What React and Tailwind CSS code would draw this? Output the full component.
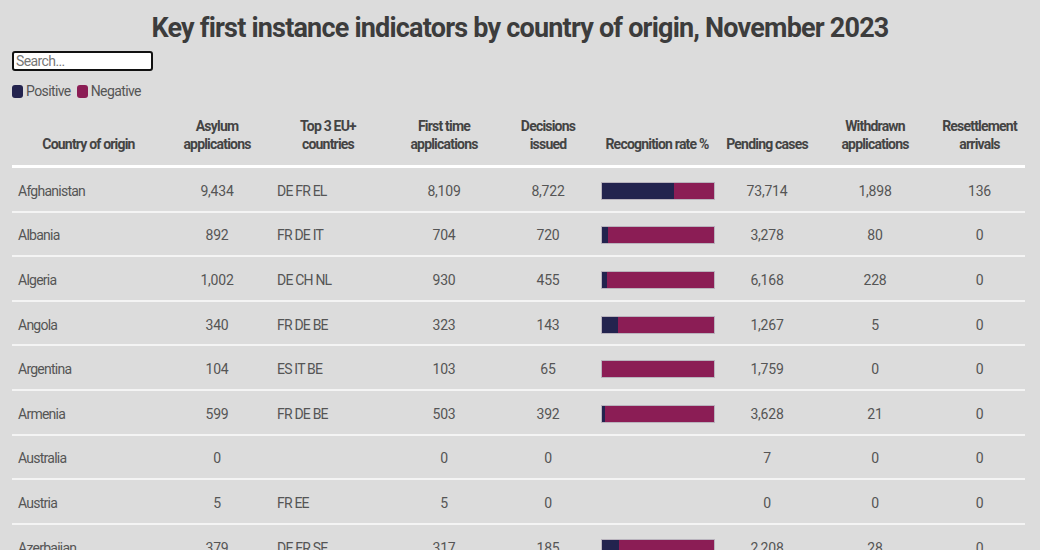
import React from 'react'

const rows = [
  ['Afghanistan', '9,434', 'DE FR EL', '8,109', '8,722', 64.5, '73,714', '1,898', '136'],
  ['Albania', '892', 'FR DE IT', '704', '720', 5.5, '3,278', '80', '0'],
  ['Algeria', '1,002', 'DE CH NL', '930', '455', 4.5, '6,168', '228', '0'],
  ['Angola', '340', 'FR DE BE', '323', '143', 15, '1,267', '5', '0'],
  ['Argentina', '104', 'ES IT BE', '103', '65', 0, '1,759', '0', '0'],
  ['Armenia', '599', 'FR DE BE', '503', '392', 3, '3,628', '21', '0'],
  ['Australia', '0', '', '0', '0', null, '7', '0', '0'],
  ['Austria', '5', 'FR EE', '5', '0', null, '0', '0', '0'],
  ['Azerbaijan', '379', 'DE FR SE', '317', '185', 16, '2,208', '28', '0'],
]

const headers = [
  'Country of origin',
  'Asylum applications',
  'Top 3 EU+ countries',
  'First time applications',
  'Decisions issued',
  'Recognition rate %',
  'Pending cases',
  'Withdrawn applications',
  'Resettlement arrivals',
]

const cols = 'grid grid-cols-[153px_104px_118px_114px_94px_124px_96px_120px_89px]'

const Bar = ({ pos }) => {
  if (pos === null) return null
  return (
    <div className="flex h-[18px] w-[114px] border border-[#b9b3bd]">
      <div className="h-full bg-[#23234e]" style={{ width: `${pos}%` }}></div>
      <div className="h-full flex-1 bg-[#8b1d55]"></div>
    </div>
  )
}

export default function App() {
  return (
    <div className="min-h-[550px] w-[1040px] overflow-hidden bg-[#dcdcdc] font-['Roboto',sans-serif] text-[#555]">
      <h1 className="pt-[11px] text-center text-[27px] font-bold leading-[34px] tracking-[-0.8px] text-[#3c3c3c]">
        Key first instance indicators by country of origin, November 2023
      </h1>

      <div className="px-3">
        <input
          type="text"
          placeholder="Search..."
          className="mt-[6px] h-[20px] w-[141px] rounded-[3px] border-2 border-[#111] bg-white px-[2px] text-[14px] leading-none tracking-[-0.6px] text-[#333] outline-none placeholder:text-[#777]"
        />

        {/* legend */}
        <div className="mt-[10px] flex items-center text-[14px] leading-[16px] tracking-[-0.6px]">
          <span className="mr-[3px] inline-block h-[13px] w-[11px] rounded-[3px] bg-[#23234e]"></span>
          <span>Positive</span>
          <span className="ml-[6px] mr-[3px] inline-block h-[13px] w-[11px] rounded-[3px] bg-[#8b1d55]"></span>
          <span>Negative</span>
        </div>

        {/* table */}
        <div className="mt-[9px] w-[1013px]">
          <div className={`${cols} h-[60px] items-center border-b-[3px] border-white pb-[3px] text-[14px] font-bold leading-[18px] tracking-[-0.8px] text-[#444]`}>
            {headers.map((h, i) => (
              <div key={i} className="px-1 text-center">
                {h === 'Country of origin' ? (
                  <div className="pt-[18px]">{h}</div>
                ) : h === 'Recognition rate %' || h === 'Pending cases' ? (
                  <div className="pt-[18px] whitespace-nowrap">{h}</div>
                ) : (
                  <div className="mx-auto max-w-[80px]">{h}</div>
                )}
              </div>
            ))}
          </div>

          {rows.map((r, i) => (
            <div key={i} className={`${cols} h-[44.6px] items-center border-b-2 border-[#f4f4f4] pt-[3px] text-[14px] leading-[18px] tracking-[-0.2px]`}>
              <div className="pl-[6px] tracking-[-0.75px]">{r[0]}</div>
              <div className="text-center">{r[1]}</div>
              <div className="pl-[8px] tracking-[-0.8px]">{r[2]}</div>
              <div className="text-center">{r[3]}</div>
              <div className="text-center">{r[4]}</div>
              <div className="flex justify-center pl-[1px]">
                <Bar pos={r[5]} />
              </div>
              <div className="text-center">{r[6]}</div>
              <div className="text-center">{r[7]}</div>
              <div className="text-center">{r[8]}</div>
            </div>
          ))}
        </div>
      </div>
    </div>
  )
}
